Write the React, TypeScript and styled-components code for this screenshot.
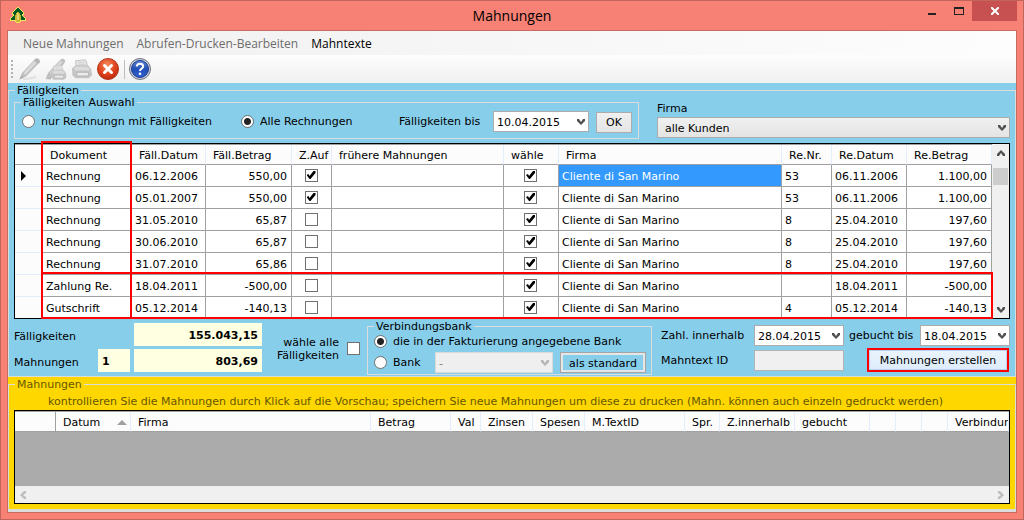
import React from "react";
import styled, { createGlobalStyle, css } from "styled-components";

const GlobalStyle = createGlobalStyle`
  *, *::before, *::after { box-sizing: border-box; }
  body {
    margin: 0;
    color: #000;
    font: 11px/15px "DejaVu Sans", Verdana, sans-serif;
  }
  button, input, select { font: inherit; color: inherit; margin: 0; }
`;

/* ---------- window frame ---------- */

const Window = styled.div`
  display: flex;
  flex-direction: column;
  min-height: 100vh;
  padding: 0 6px 6px;
  border: 1px solid #c1655a;
  background: #f68174;
`;

const TitleBar = styled.header`
  display: grid;
  grid-template-columns: 1fr auto 1fr;
  align-items: start;
  height: 29px;
`;

const AppIcon = styled.svg`
  width: 16px;
  height: 16px;
  margin: 6px 0 0 3px;
`;

const Title = styled.h1`
  margin: 0;
  padding-top: 5px;
  font: 400 14px/20px "Open Sans", "Noto Sans", sans-serif;
`;

const WindowButtons = styled.div`
  display: flex;
  justify-content: flex-end;
`;

const WindowButton = styled.button<{ $close?: boolean }>`
  display: grid;
  place-items: center;
  width: ${(p) => (p.$close ? 45 : 27)}px;
  height: 20px;
  padding: 0;
  border: 0;
  background: ${(p) => (p.$close ? "#c75050" : "transparent")};
`;

const Client = styled.main`
  display: flex;
  flex: 1;
  flex-direction: column;
  padding-bottom: 2px;
  border: 1px solid #c96a60;
  background: #dcdcdc;
`;

/* ---------- menu and toolbar ---------- */

const MenuBar = styled.nav`
  display: flex;
  gap: 13px;
  height: 24px;
  padding-left: 15px;
  background: linear-gradient(90deg, #f0f0f0, #fdfdfd);
`;

const MenuItem = styled.button`
  padding: 1px 0 0;
  border: 0;
  background: none;
  font: 12px/23px "Open Sans", "Noto Sans", sans-serif;
  &:disabled { color: #6d6d6d; }
`;

const ToolBar = styled.div`
  display: flex;
  align-items: center;
  gap: 2px;
  height: 28px;
  padding-left: 3px;
  background: linear-gradient(#fdfdfd, #f0f0f0);
`;

const Grip = styled.span`
  width: 2px;
  height: 18px;
  margin-right: 3px;
  background: repeating-linear-gradient(#b4b4b4 0 2px, transparent 2px 4px);
`;

const Divider = styled.span`
  width: 1px;
  height: 19px;
  margin: 0 1px 0 2px;
  background: #bdbdbd;
`;

const ToolButton = styled.button`
  display: grid;
  place-items: center;
  width: 24px;
  height: 24px;
  padding: 0;
  border: 0;
  background: none;
`;

/* ---------- panels and groups ---------- */

const Panel = styled.section<{ $color: string; $grow?: boolean }>`
  display: flex;
  flex-direction: column;
  flex: ${(p) => (p.$grow ? "1" : "none")};
  background: ${(p) => p.$color};
`;

const Group = styled.fieldset<{ $grow?: boolean }>`
  display: flex;
  flex-direction: column;
  flex: ${(p) => (p.$grow ? "1" : "none")};
  min-width: 0;
  margin: 0;
  padding: 0 5px;
  border: 1px solid #dcdcdc;
`;

const Legend = styled.legend`
  margin-left: 1px;
  padding: 2px 2px 0;
  line-height: 12px;
`;

const ListLegend = styled(Legend)`
  color: #665600;
`;

const FilterRow = styled.div`
  display: flex;
  gap: 18px;
  margin: -2px 0 4px;
`;

const FilterFields = styled.div`
  display: flex;
  align-items: center;
  height: 29px;
  padding: 0 1px 4px 2px;
`;

const RadioLabel = styled.label<{ $width?: number }>`
  display: flex;
  align-items: center;
  gap: 6px;
  width: ${(p) => (p.$width ? `${p.$width}px` : "auto")};
  white-space: nowrap;
`;

const Radio = styled.input.attrs({ type: "radio" })`
  appearance: none;
  flex: none;
  width: 13px;
  height: 13px;
  border: 1px solid #707070;
  border-radius: 50%;
  background: #fff;
  &:checked { background: radial-gradient(circle, #222 0 3px, #fff 4px); }
`;

const Check = styled.input.attrs({ type: "checkbox" })`
  appearance: none;
  display: block;
  flex: none;
  width: 13px;
  height: 13px;
  border: 1px solid #707070;
  background: #fff;
  &:checked::before {
    content: "";
    display: block;
    width: 9px;
    height: 9px;
    margin: 1px;
    background: #000;
    clip-path: polygon(0 4px, 2px 3px, 3px 5px, 7px 0, 9px 0, 9px 2px, 4px 8px, 3px 8px);
  }
`;

const FieldLabel = styled.label<{ $width?: number }>`
  width: ${(p) => (p.$width ? `${p.$width}px` : "auto")};
  white-space: nowrap;
`;

const SelectBox = styled.span<{ $width?: number; $tone?: "white" | "grey" | "off" }>`
  display: grid;
  grid-template-columns: 1fr 17px;
  align-items: center;
  width: ${(p) => (p.$width ? `${p.$width}px` : "100%")};
  height: 21px;
  color: ${(p) => (p.$tone === "off" ? "#b5b5b5" : "#505050")};

  select {
    appearance: none;
    grid-area: 1 / 1 / 2 / 3;
    width: 100%;
    height: 21px;
    padding: 1px 3px 0;
    border: 1px solid #acacac;
    border-radius: 0;
    color: #000;
    ${(p) =>
      p.$tone === "grey"
        ? css`padding-left: 7px; background: linear-gradient(#f0f0f0, #e4e4e4);`
        : p.$tone === "off"
        ? css`border-color: #d9d9d9; background: #efefef; color: #808080; opacity: 1;`
        : css`background: #fff;`}
  }
  svg {
    grid-area: 1 / 2 / 2 / 3;
    z-index: 1;
    justify-self: center;
    pointer-events: none;
  }
`;

const Button = styled.button<{ $width: number; $kind?: "accent" | "framed" }>`
  width: ${(p) => p.$width}px;
  height: 21px;
  padding: 1px 0 0;
  border: 1px solid #acacac;
  background: linear-gradient(#f0f0f0, #e5e5e5);
  white-space: nowrap;
  ${(p) =>
    p.$kind === "framed" &&
    css`
      border-color: #a5a5a5;
      background: #87ceeb;
      box-shadow: inset 0 0 0 2px #e6e6e6;
    `}
  ${(p) =>
    p.$kind === "accent" &&
    css`
      height: 24px;
      border: 2px solid #ff0000;
      background: linear-gradient(#ecf4fc, #dcebfc);
      box-shadow: inset 0 0 0 1px #b9d3f2;
    `}
`;

const OkSlot = styled.span`
  display: flex;
  padding: 1px 0 0 7px;
`;

const CustomerField = styled.div`
  display: flex;
  flex: 1;
  flex-direction: column;
  gap: 1px;
  padding-top: 6px;
`;

/* ---------- data grids ---------- */

const GridFrame = styled.div`
  position: relative;
  display: flex;
  border: 1px solid #000;
  background: #fff;
`;

const Table = styled.table`
  flex: 1;
  width: 0;
  table-layout: fixed;
  border-collapse: separate;
  border-spacing: 0;
  border-top: 1px solid #a0a0a0;
`;

const HeadCell = styled.th`
  height: 20px;
  padding: 1px 0 0 7px;
  overflow: hidden;
  border-right: 1px solid #e3edfb;
  border-bottom: 1px solid #a0a0a0;
  background: #fcfcfc;
  font-weight: 400;
  text-align: left;
  white-space: nowrap;
`;

const Cell = styled.td<{ $align?: "right"; $selected?: boolean }>`
  height: 22px;
  padding: 1px 4px 0 3px;
  border-right: 1px solid #a0a0a0;
  border-bottom: 1px solid #a0a0a0;
  background: ${(p) => (p.$selected ? "#3399ff" : "#fff")};
  color: ${(p) => (p.$selected ? "#fff" : "inherit")};
  text-align: ${(p) => p.$align ?? "left"};
  white-space: nowrap;
  tr:last-child > & { height: 21px; border-bottom: 0; }
`;

const CheckCell = styled(Cell)`
  padding: 0 1px 0 0;
  ${Check} { margin: 0 auto; }
`;

const RowHead = styled(Cell)`
  padding: 0 0 0 6px;
  border-color: #e3edfb;
  background: #fcfcfc;
  svg { display: block; }
`;

const VerticalScroll = styled.div`
  display: flex;
  flex-direction: column;
  align-items: center;
  width: 17px;
  padding: 6px 0 5px;
  background: #f0f0f0;
  color: #505050;
`;

const Thumb = styled.span`
  width: 15px;
  height: 17px;
  margin: 12px 0 auto;
  background: #cdcdcd;
`;

const ColumnMark = styled.div`
  position: absolute;
  top: -3px;
  bottom: -1px;
  left: 26px;
  width: 91px;
  border: 2px solid #ff0000;
  pointer-events: none;
`;

const RowMark = styled.div`
  position: absolute;
  right: 16px;
  bottom: -1px;
  left: 26px;
  height: 47px;
  border: 2px solid #ff0000;
  pointer-events: none;
`;

/* ---------- summary row ---------- */

const SummaryRow = styled.div`
  display: flex;
  padding-bottom: 1px;
`;

const Totals = styled.div`
  display: grid;
  grid-template-columns: 84px 36px 128px;
  grid-template-rows: 23px 23px;
  row-gap: 3px;
  align-items: center;
  margin-top: 4px;
  ${FieldLabel} { padding-top: 3px; }
`;

const TotalField = styled.input<{ $wide?: boolean }>`
  grid-column: ${(p) => (p.$wide ? 3 : 2)};
  width: ${(p) => (p.$wide ? 128 : 32)}px;
  height: 23px;
  padding: 1px 4px 0;
  border: 0;
  background: #ffffe1;
  font-weight: 700;
  text-align: ${(p) => (p.$wide ? "right" : "left")};
`;

const SelectAll = styled.label`
  display: flex;
  align-items: center;
  align-self: center;
  justify-content: flex-end;
  gap: 8px;
  width: 98px;
  margin-right: 7px;
  padding-top: 3px;
  line-height: 13px;
  text-align: right;
`;

const BankFields = styled.div`
  display: grid;
  grid-template-rows: 17px 21px;
  row-gap: 2px;
  width: 273px;
  padding: 0 0 1px 1px;
`;

const BankRow = styled.div`
  display: flex;
  align-items: center;
  gap: 7px;
  ${RadioLabel} { flex: 1; }
`;

const DateFields = styled.div`
  display: grid;
  grid-template-columns: 93px 90px 76px 90px;
  grid-template-rows: 21px 24px;
  row-gap: 2px;
  align-items: center;
  margin: 6px 0 3px auto;
  ${SelectBox} + ${FieldLabel} { padding-left: 5px; }
  ${SelectBox} + ${FieldLabel}:nth-of-type(3) { padding-left: 0; }
  ${Button} { grid-column: 3 / 5; justify-self: end; margin-right: 1px; }
`;

const TextIdInput = styled.input`
  width: 100%;
  height: 21px;
  padding: 0 3px;
  border: 1px solid #b4b4b4;
  background: #f0f0f0;
`;

/* ---------- dunning list ---------- */

const Hint = styled.p`
  margin: 0;
  padding: 3px 0 1px 34px;
  color: #665600;
  white-space: nowrap;
`;

const ListFrame = styled.div`
  display: flex;
  flex: 1;
  flex-direction: column;
  margin-bottom: 5px;
  border: 1px solid #000;
  background: #ababab;
  ${Table} { flex: none; width: 100%; }
`;

const ListHeadCell = styled(HeadCell)`
  &:first-child { border-right-color: #a0a0a0; }
`;

const Sortable = styled.span`
  display: flex;
  align-items: center;
  justify-content: space-between;
  padding-right: 3px;
`;

const ListSpace = styled.div`
  flex: 1;
  min-height: 54px;
`;

const HorizontalScroll = styled.div`
  display: flex;
  align-items: center;
  justify-content: space-between;
  height: 17px;
  padding: 0 5px;
  background: #f0f0f0;
  color: #bdbdbd;
`;

/* ---------- drawings ---------- */

const arrows = {
  down: "M0 0h2l2 3 2-3h2v2L4 6 0 2z",
  up: "M0 6h2l2-3 2 3h2V4L4 0 0 4z",
  left: "M6 0v2L3 4l3 2v2H4L0 4l4-4z",
  right: "M0 0v2l3 2-3 2v2h2l4-4-4-4z",
};

function Arrow({ to }: { to: keyof typeof arrows }) {
  const upright = to === "down" || to === "up";
  return (
    <svg width={upright ? 8 : 6} height={upright ? 6 : 8} fill="currentColor" aria-hidden="true">
      <path d={arrows[to]} />
    </svg>
  );
}

function TreeIcon() {
  return (
    <AppIcon viewBox="0 0 16 16" shapeRendering="crispEdges" aria-hidden="true">
      <path
        d="M7 0h2v1h1v1h1v1h1v1h1v1h1v3h-1v1h1v1h1v1h1v3h-5v1h-1v1H6v-1H5v-1H0v-3h1v-1h1V9h1V8H2V5h1V4h1V3h1V2h1V1h1z"
        fill="#efe65c"
      />
      <path
        d="M7 1h2v1h1v1h1v1h1v1h1v2h-1v2h1v1h1v1h1v2h-4v-3H5v3H1v-2h1v-1h1V9h1V7H3V5h1V4h1V3h1V2h1z"
        fill="#04591e"
      />
      <path d="M7 5h2v1h1v2h1v5h-1v2H6v-2H5V8h1V6h1z" fill="#c9b239" />
      <path d="M7 6h1v1h1v6H7z" fill="#eadb66" />
    </AppIcon>
  );
}

function PencilIcon() {
  return (
    <svg width="24" height="24" viewBox="0 0 24 24" aria-hidden="true">
      <path d="M5 22q8 0 13-2.500" stroke="#e2e2e2" strokeWidth="2" fill="none" />
      <path d="M1.500 22.500 4 16 17 2q1.500-1.500 4 0 1.500 1.500.5 3.500L8 19.500z" fill="#bebebe" />
      <path d="M5.500 16 16.500 3.500 19 5.500 7.500 18z" fill="#dadada" />
      <path d="M17 2.500q1.500-1.500 3.500 0t1 3l-1.500 1.500-4-3.500z" fill="#b5b5b5" />
      <path d="m1.500 22.500 1.500-4 2.500 2z" fill="#b0b0b0" />
    </svg>
  );
}

function PrinterBody() {
  return (
    <>
      <path d="M5.500 10 5 3l11-1 2.500 8z" fill="#e6e6e6" stroke="#c2c2c2" />
      <path d="M7.500 5h7M8 7h7.500" stroke="#d0d0d0" />
      <path d="M1 11.500 5 8h13.500l3.500 4 1 6.500-3.500 3.500H5l-3.500-3z" fill="#c6c6c6" />
      <path d="M3 11.500 5.500 9.500h12.500l2.500 2.500-1 1.500H5z" fill="#dcdcdc" />
      <path d="M6 15.500h12.500l1 4H6.500z" fill="#ececec" stroke="#b2b2b2" />
    </>
  );
}

function PencilPrinterIcon() {
  return (
    <svg width="24" height="24" viewBox="0 0 24 24" aria-hidden="true">
      <path d="M1.500 22 4 16 16.500 2.500q2-1.500 4 0 1.500 1.500 0 3.500L10 20z" fill="#bfbfbf" />
      <path d="M5.500 16 16.500 3.500 18.500 5 8 17.500z" fill="#d9d9d9" />
      <path d="M1.500 22 7 20v2.500z" fill="#b8b8b8" />
      <g transform="translate(6 7) scale(.72)">
        <PrinterBody />
      </g>
    </svg>
  );
}

function PrinterIcon() {
  return (
    <svg width="24" height="24" viewBox="0 0 24 24" aria-hidden="true">
      <g transform="translate(1 1) scale(.92)">
        <PrinterBody />
      </g>
    </svg>
  );
}

function CancelIcon() {
  return (
    <svg width="24" height="24" viewBox="0 0 24 24" aria-hidden="true">
      <defs>
        <radialGradient id="cancel" cx=".45" cy=".3" r=".75">
          <stop offset="0" stopColor="#f58a5c" />
          <stop offset=".55" stopColor="#e2451f" />
          <stop offset="1" stopColor="#b8230b" />
        </radialGradient>
      </defs>
      <circle cx="12" cy="12" r="10.500" fill="url(#cancel)" stroke="#b03a20" />
      <path d="m8.500 8.500 7 7m0-7-7 7" stroke="#fff" strokeWidth="3" strokeLinecap="round" />
    </svg>
  );
}

function HelpIcon() {
  return (
    <svg width="24" height="24" viewBox="0 0 24 24" aria-hidden="true">
      <defs>
        <linearGradient id="help" x1="0" y1="0" x2="0" y2="1">
          <stop offset="0" stopColor="#5f86d8" />
          <stop offset=".5" stopColor="#2350b6" />
          <stop offset="1" stopColor="#2c5fd0" />
        </linearGradient>
      </defs>
      <circle cx="12" cy="12" r="10.500" fill="#c9cedb" stroke="#6f7482" />
      <circle cx="12" cy="12" r="8.500" fill="url(#help)" stroke="#1c3c8c" />
      <path
        d="M8.800 9.500Q9 6.800 12 6.800t3.200 2.500q0 1.400-1.600 2.400T12 14"
        stroke="#fff"
        strokeWidth="2"
        fill="none"
      />
      <circle cx="12" cy="16.800" r="1.300" fill="#fff" />
    </svg>
  );
}

/* ---------- data ---------- */

type Due = [
  doc: string, dueDate: string, dueAmount: string, open: boolean,
  nr: string, date: string, amount: string
];

const dues: Due[] = [
  ["Rechnung", "06.12.2006", "550,00", true, "53", "06.11.2006", "1.100,00"],
  ["Rechnung", "05.01.2007", "550,00", true, "53", "06.11.2006", "1.100,00"],
  ["Rechnung", "31.05.2010", "65,87", false, "8", "25.04.2010", "197,60"],
  ["Rechnung", "30.06.2010", "65,87", false, "8", "25.04.2010", "197,60"],
  ["Rechnung", "31.07.2010", "65,86", false, "8", "25.04.2010", "197,60"],
  ["Zahlung Re.", "18.04.2011", "-500,00", false, "", "18.04.2011", "-500,00"],
  ["Gutschrift", "05.12.2014", "-140,13", false, "4", "05.12.2014", "-140,13"],
];

const dueColumns: [string, number | undefined][] = [
  ["", 28], ["Dokument", 89], ["Fäll.Datum", 74], ["Fäll.Betrag", 86], ["Z.Auf", 40],
  ["frühere Mahnungen", 172], ["wähle", 55], ["Firma", undefined], ["Re.Nr.", 50],
  ["Re.Datum", 75], ["Re.Betrag", 85],
];

const listColumns: [string, number | undefined][] = [
  ["", 41], ["Datum", 75], ["Firma", 240], ["Betrag", 80], ["Val", 30], ["Zinsen", 52],
  ["Spesen", 52], ["M.TextID", 100], ["Spr.", 35], ["Z.innerhalb", 75], ["gebucht", 75],
  ["", 26], ["", 26], ["", 26], ["Verbindungsbank", undefined],
];

function Columns({ of }: { of: [string, number | undefined][] }) {
  return (
    <colgroup>
      {of.map(([, width], i) => (
        <col key={i} width={width} />
      ))}
    </colgroup>
  );
}

function Select({
  id, value, label, width, tone,
}: {
  id: string; value: string; label?: string; width?: number; tone?: "white" | "grey" | "off";
}) {
  return (
    <SelectBox $width={width} $tone={tone}>
      <select id={id} aria-label={label} disabled={tone === "off"} defaultValue={value}>
        <option>{value}</option>
      </select>
      <Arrow to="down" />
    </SelectBox>
  );
}

export default function App() {
  return (
    <>
      <GlobalStyle />
      <Window>
        <TitleBar>
          <TreeIcon />
          <Title>Mahnungen</Title>
          <WindowButtons>
            <WindowButton aria-label="Minimieren">
              <svg width="8" height="8"><path d="M0 6h8v2H0z" fill="#222" /></svg>
            </WindowButton>
            <WindowButton aria-label="Maximieren">
              <svg width="10" height="8"><path d="M0 0h10v8H0zM1 2v5h8V2z" fill="#222" fillRule="evenodd" /></svg>
            </WindowButton>
            <WindowButton $close aria-label="Schließen">
              <svg width="8" height="8"><path d="m0 0 8 8m0-8L0 8" stroke="#fff" strokeWidth="2" /></svg>
            </WindowButton>
          </WindowButtons>
        </TitleBar>

        <Client>
          <MenuBar>
            <MenuItem disabled>Neue Mahnungen</MenuItem>
            <MenuItem disabled>Abrufen-Drucken-Bearbeiten</MenuItem>
            <MenuItem>Mahntexte</MenuItem>
          </MenuBar>
          <ToolBar>
            <Grip />
            <ToolButton disabled aria-label="Bearbeiten"><PencilIcon /></ToolButton>
            <ToolButton disabled aria-label="Bearbeiten und drucken"><PencilPrinterIcon /></ToolButton>
            <ToolButton disabled aria-label="Drucken"><PrinterIcon /></ToolButton>
            <ToolButton aria-label="Abbrechen"><CancelIcon /></ToolButton>
            <Divider />
            <ToolButton aria-label="Hilfe"><HelpIcon /></ToolButton>
          </ToolBar>

          <Panel $color="#87ceeb">
            <Group>
              <Legend>Fälligkeiten</Legend>
              <FilterRow>
                <Group>
                  <Legend>Fälligkeiten Auswahl</Legend>
                  <FilterFields>
                    <RadioLabel $width={219}>
                      <Radio name="scope" />
                      nur Rechnungn mit Fälligkeiten
                    </RadioLabel>
                    <RadioLabel $width={158}>
                      <Radio name="scope" defaultChecked />
                      Alle Rechnungen
                    </RadioLabel>
                    <FieldLabel htmlFor="dueUntil" $width={94}>Fälligkeiten bis</FieldLabel>
                    <Select id="dueUntil" value="10.04.2015" width={96} />
                    <OkSlot>
                      <Button $width={36}>OK</Button>
                    </OkSlot>
                  </FilterFields>
                </Group>
                <CustomerField>
                  <FieldLabel htmlFor="customer">Firma</FieldLabel>
                  <Select id="customer" value="alle Kunden" tone="grey" />
                </CustomerField>
              </FilterRow>

              <GridFrame>
                <Table>
                  <Columns of={dueColumns} />
                  <thead>
                    <tr>
                      {dueColumns.map(([name], i) => (
                        <HeadCell key={i}>{name}</HeadCell>
                      ))}
                    </tr>
                  </thead>
                  <tbody>
                    {dues.map(([doc, dueDate, dueAmount, open, nr, date, amount], i) => (
                      <tr key={i}>
                        <RowHead>
                          {i === 0 && (
                            <svg width="5" height="10" aria-hidden="true"><path d="M0 0v10l5-5z" /></svg>
                          )}
                        </RowHead>
                        <Cell>{doc}</Cell>
                        <Cell>{dueDate}</Cell>
                        <Cell $align="right">{dueAmount}</Cell>
                        <CheckCell><Check aria-label="Z.Auf" defaultChecked={open} /></CheckCell>
                        <Cell />
                        <CheckCell><Check aria-label="wähle" defaultChecked /></CheckCell>
                        <Cell $selected={i === 0}>Cliente di San Marino</Cell>
                        <Cell>{nr}</Cell>
                        <Cell>{date}</Cell>
                        <Cell $align="right">{amount}</Cell>
                      </tr>
                    ))}
                  </tbody>
                </Table>
                <VerticalScroll>
                  <Arrow to="up" />
                  <Thumb />
                  <Arrow to="down" />
                </VerticalScroll>
                <ColumnMark />
                <RowMark />
              </GridFrame>

              <SummaryRow>
                <Totals>
                  <FieldLabel htmlFor="dueTotal">Fälligkeiten</FieldLabel>
                  <TotalField id="dueTotal" $wide readOnly value="155.043,15" />
                  <FieldLabel htmlFor="dunCount">Mahnungen</FieldLabel>
                  <TotalField id="dunCount" readOnly value="1" />
                  <TotalField aria-label="Betrag der Mahnungen" $wide readOnly value="803,69" />
                </Totals>
                <SelectAll>
                  <span>wähle alle<br />Fälligkeiten</span>
                  <Check />
                </SelectAll>
                <Group>
                  <Legend>Verbindungsbank</Legend>
                  <BankFields>
                    <RadioLabel>
                      <Radio name="bank" defaultChecked />
                      die in der Fakturierung angegebene Bank
                    </RadioLabel>
                    <BankRow>
                      <RadioLabel>
                        <Radio name="bank" />
                        Bank
                      </RadioLabel>
                      <Select id="bankName" label="Bank" value="-" width={118} tone="off" />
                      <Button $width={86} $kind="framed">als standard</Button>
                    </BankRow>
                  </BankFields>
                </Group>
                <DateFields>
                  <FieldLabel htmlFor="payWithin">Zahl. innerhalb</FieldLabel>
                  <Select id="payWithin" value="28.04.2015" />
                  <FieldLabel htmlFor="bookedUntil">gebucht bis</FieldLabel>
                  <Select id="bookedUntil" value="18.04.2015" />
                  <FieldLabel htmlFor="textId">Mahntext ID</FieldLabel>
                  <TextIdInput id="textId" readOnly />
                  <Button $width={142} $kind="accent">Mahnungen erstellen</Button>
                </DateFields>
              </SummaryRow>
            </Group>
          </Panel>

          <Panel $color="#ffd700" $grow>
            <Group $grow>
              <ListLegend>Mahnungen</ListLegend>
              <Hint>
                kontrollieren Sie die Mahnungen durch Klick auf die Vorschau; speichern Sie neue Mahnungen um
                diese zu drucken (Mahn. können auch einzeln gedruckt werden)
              </Hint>
              <ListFrame>
                <Table>
                  <Columns of={listColumns} />
                  <thead>
                    <tr>
                      {listColumns.map(([name], i) => (
                        <ListHeadCell key={i}>
                          {name === "Datum" ? (
                            <Sortable>
                              {name}
                              <svg width="10" height="5" aria-hidden="true"><path d="M5 0l5 5H0z" fill="#a0a0a0" /></svg>
                            </Sortable>
                          ) : (
                            name
                          )}
                        </ListHeadCell>
                      ))}
                    </tr>
                  </thead>
                </Table>
                <ListSpace />
                <HorizontalScroll>
                  <Arrow to="left" />
                  <Arrow to="right" />
                </HorizontalScroll>
              </ListFrame>
            </Group>
          </Panel>
        </Client>
      </Window>
    </>
  );
}
